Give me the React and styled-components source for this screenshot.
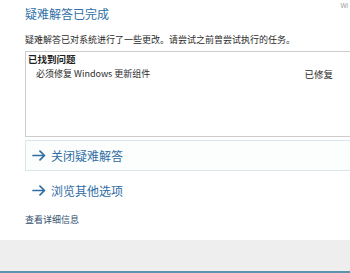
import React from 'react'
import styled, { createGlobalStyle } from 'styled-components'

const GlobalStyle = createGlobalStyle`
    html, body {
        margin: 0;
        padding: 0;
        background: #ffffff;
    }
    body {
        width: 350px;
        height: 273px;
        overflow: hidden;
        font-family: "Noto Sans CJK SC", "Noto Sans", sans-serif;
    }
`;

function Arrow() {
    return (
        <svg width="14" height="11" viewBox="0 0 14 11" fill="none">
            <path d="M1 5.5 H12.5 M8 1.2 L12.5 5.5 L8 9.8" stroke="#2f6da3" strokeWidth="1.7" strokeLinecap="round" strokeLinejoin="round" />
        </svg>
    )
}

function App() {
    const links = [
        { text: '关闭疑难解答', framed: true },
        { text: '浏览其他选项', framed: false },
    ]
    return (
        <Page>
            <GlobalStyle />
            <Main>
                <Header>
                    <Title>疑难解答已完成</Title>
                    <Corner>Wi</Corner>
                </Header>
                <Intro>疑难解答已对系统进行了一些更改。请尝试之前曾尝试执行的任务。</Intro>
                <ProblemBox>
                    <ProblemHeading>已找到问题</ProblemHeading>
                    <ProblemRow>
                        <span>必须修复 Windows 更新组件</span>
                        <Status>已修复</Status>
                    </ProblemRow>
                </ProblemBox>
                {links.map((link) => (
                    <CommandLink key={link.text} framed={link.framed}>
                        <Arrow />
                        <span>{link.text}</span>
                    </CommandLink>
                ))}
                <Details>查看详细信息</Details>
            </Main>
            <Footer />
        </Page>
    )
}

const Page = styled.div`
    width: 350px;
    height: 273px;
    display: flex;
    flex-direction: column;
    overflow: hidden;
`;

const Main = styled.div`
    height: 240px;
    box-sizing: border-box;
    padding-left: 25px;
    display: flex;
    flex-direction: column;
    background: #ffffff;
`;

const Header = styled.div`
    height: 28px;
    display: flex;
    justify-content: space-between;
    align-items: center;
`;

const Title = styled.h1`
    margin: 0;
    font-size: 12px;
    font-weight: 400;
    line-height: 28px;
    color: #2d6ea6;
`;

const Corner = styled.span`
    align-self: flex-start;
    margin-top: 2px;
    margin-right: 2px;
    font-family: "Liberation Sans", sans-serif;
    font-size: 6.5px;
    color: #9a9a9a;
`;

const Intro = styled.p`
    margin: 6px 0 0;
    font-size: 9px;
    line-height: 12px;
    color: #2b2b2b;
    white-space: nowrap;
`;

const ProblemBox = styled.div`
    margin-top: 5px;
    margin-right: -10px;
    height: 86px;
    box-sizing: border-box;
    border: 1px solid #cdcdcd;
    border-right: none;
    padding: 1px 0 0 2px;
    display: flex;
    flex-direction: column;
`;

const ProblemHeading = styled.div`
    font-size: 9.5px;
    font-weight: 700;
    line-height: 12px;
    color: #1e1e1e;
`;

const ProblemRow = styled.div`
    margin-top: 3px;
    padding-left: 8px;
    padding-right: 27px;
    display: flex;
    justify-content: space-between;
    font-size: 9px;
    line-height: 12px;
    color: #2b2b2b;
`;

const Status = styled.span`
    font-size: 9.5px;
`;

const CommandLink = styled.div`
    margin-top: ${props => props.framed ? '3px' : '4px'};
    margin-right: -10px;
    height: 31px;
    box-sizing: border-box;
    border: 1px solid ${props => props.framed ? '#d9e6eb' : 'transparent'};
    border-right: none;
    background: ${props => props.framed ? '#fcfdfd' : 'transparent'};
    padding-left: 6px;
    display: flex;
    align-items: center;
    gap: 5px;
    font-size: 12px;
    color: #2f6da3;
`;

const Details = styled.div`
    margin-top: 8px;
    font-size: 9px;
    line-height: 12px;
    color: #34506d;
`;

const Footer = styled.div`
    height: 33px;
    box-sizing: border-box;
    background: #eeeeee;
    border-bottom: 2px solid #5b93ad;
`;

export default App
